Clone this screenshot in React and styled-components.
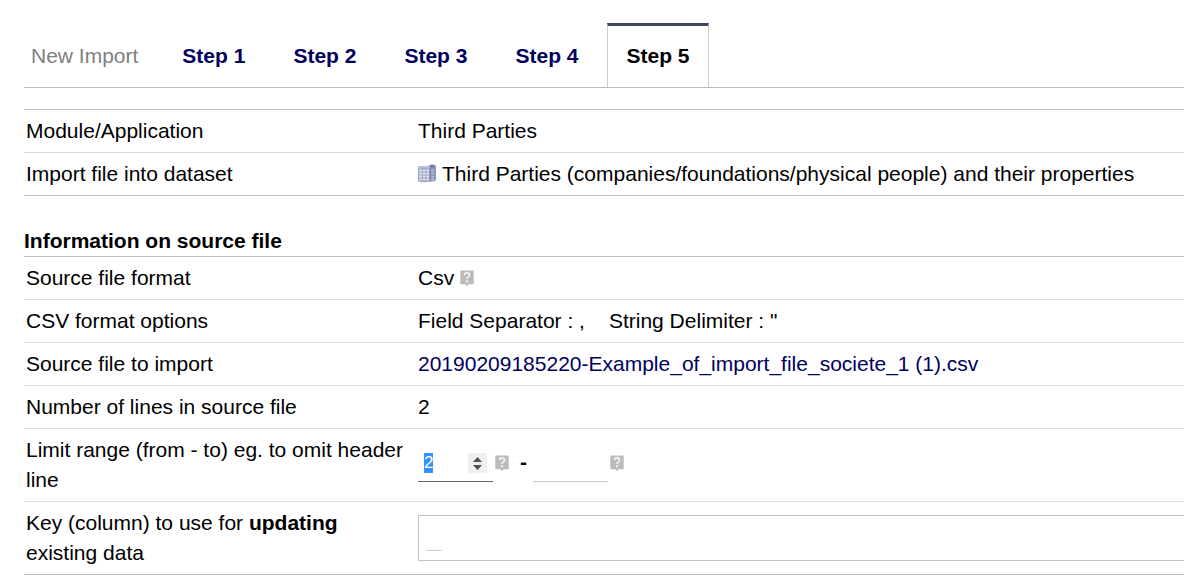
import React, { useEffect, useRef } from "react";
import styled, { createGlobalStyle } from "styled-components";

const GlobalStyle = createGlobalStyle`
  body {
    margin: 0;
    background-color: #fff;
    color: #000;
    font-family: "Liberation Sans", Arial, sans-serif;
    font-size: 21px;
    line-height: 30px;
  }
`;
const Page = styled.main`
  padding: 23px 0 12px 24px;
  overflow: hidden;
`;
const Tabs = styled.nav`
  display: flex;
  gap: 10px;
  height: 64px;
  border-bottom: 1px solid #bbb;
`;
const TabTitle = styled.span`
  padding: 18px 15px 0 7px;
  color: #808080;
  white-space: nowrap;
`;
const Tab = styled.a`
  padding: 15px 18px 0;
  border: 1px solid transparent;
  border-top: 3px solid transparent;
  border-bottom: none;
  color: #000060;
  font-weight: bold;
  text-decoration: none;
  white-space: nowrap;
  &[aria-current] {
    color: #000;
    border-color: #3c4664 #ccc;
  }
`;
const Table = styled.table`
  width: 100%;
  margin-top: ${(props) => (props.$spaced ? "21px" : "0")};
  border-collapse: separate;
  border-spacing: 0;
  border-top: 1px solid #c0c0c0;
  border-bottom: 1px solid #c0c0c0;
`;
const Row = styled.tr`
  & + & > * {
    border-top: 1px solid #ddd;
  }
`;
const Label = styled.th`
  box-sizing: border-box;
  width: 392px;
  padding: 6px 2px;
  font-weight: normal;
  text-align: left;
`;
const Value = styled.td`
  padding: ${(props) => (props.$wide ? "0 0 0 2px" : "6px 2px")};
`;
const Title = styled.h2`
  margin: 30px 0 0;
  font-size: 21px;
  line-height: 30px;
`;
const Line = styled.div`
  display: flex;
  align-items: center;
  white-space: nowrap;
  gap: ${(props) => props.$gap || "6px"};
`;
const FileLink = styled.a`
  color: #000060;
  text-decoration: none;
`;
const Range = styled.div`
  display: flex;
  align-items: center;
  gap: 2px;
  padding-bottom: 4px;
`;
const Dash = styled.span`
  padding: 0 4px 2px 9px;
  font-weight: bold;
`;
const NumberBox = styled.span`
  position: relative;
  display: flex;
`;
const NumberInput = styled.input`
  box-sizing: border-box;
  width: 75px;
  height: 38px;
  padding: 0 6px;
  border: none;
  border-bottom: 1px solid #ccc;
  background: transparent;
  outline: none;
  color: #000;
  font-family: inherit;
  font-size: 17px;
  appearance: textfield;
  &:focus {
    border-bottom-color: #666;
  }
  &::selection {
    background-color: #3390ff;
    color: #fff;
  }
  &::-webkit-inner-spin-button {
    display: none;
  }
`;
const Spinner = styled.svg`
  position: absolute;
  top: 9px;
  right: 6px;
`;
const KeyBox = styled.div`
  display: flex;
  align-items: flex-end;
  box-sizing: border-box;
  height: 46px;
  padding: 0 7px 9px;
  border: 1px solid #c4c4c4;
  border-right: none;
`;
const KeyInput = styled.input`
  box-sizing: border-box;
  width: 16px;
  height: 26px;
  padding: 0;
  border: none;
  border-bottom: 1px solid #ccc;
  outline: none;
  font-family: inherit;
  font-size: 17px;
`;

const HelpIcon = () => (
  <svg width="14" height="16" viewBox="0 0 14 16" aria-label="Help" role="img">
    <path
      d="M1 0.5h12q.7 0 .7.7v12.400q0 .7-.7.7H8.8L7 15.9 5.2 14.300H1q-.7 0-.7-.7V1.2q0-.7.7-.7z"
      fill="#bbb"
    />
    <path
      d="M4.500 5.100Q4.600 2.900 7 2.900t2.500 2Q9.500 6.100 8.200 6.900 7 7.600 7 9"
      fill="none"
      stroke="#f4f4f4"
      strokeWidth="1.700"
    />
    <rect x="6" y="10.200" width="2" height="2" fill="#f4f4f4" />
  </svg>
);

const CompanyIcon = () => (
  <svg width="18" height="20" viewBox="0 0 18 20" aria-hidden="true">
    <path d="M10.500 3Q11 .5 14 .5t4 2V16q-1 1.500-4 1.500h-3.500z" fill="#8f95ba" />
    <path d="M10.500 2.500Q12 .5 14 .5t4 1.700q-2 1.600-4 1.600t-3.500-1.300z" fill="#7a80a6" />
    <path d="M0 4q0-2 2-2h8q2 0 2 2v13.500q-6 1.500-12 0z" fill="#a0a5c6" />
    <path d="M0 4.500Q0 2 2 2h8q2 0 2 2z" fill="#b9bed6" />
    <path
      d="M1.200 6.500h2.600M4.800 6.500h2.600M8.400 6.500H11M1.200 9.500h2.600M4.800 9.500h2.600M8.400 9.500H11M1.200 12.500h2.600M4.800 12.500h2.600M8.400 12.500H11M1.200 15.500h2.600M4.800 15.500h2.600M8.400 15.500H11"
      stroke="#dfe3f0"
      strokeWidth="2"
    />
    <path d="M13.300 6.500h2.500M13.300 9.500h2.500M13.300 12.500h2.500M13.300 15.500h2.500" stroke="#c3c8e2" strokeWidth="1.500" />
    <path d="M12.300 4v13.500" stroke="#757ba3" strokeWidth=".8" />
  </svg>
);

const steps = ["Step 1", "Step 2", "Step 3", "Step 4", "Step 5"];

const App = () => {
  const fromRef = useRef(null);

  useEffect(() => {
    fromRef.current.focus();
    fromRef.current.select();
  }, []);

  return (
    <Page>
      <GlobalStyle />
      <Tabs>
        <TabTitle>New Import</TabTitle>
        {steps.map((step) => (
          <Tab
            key={step}
            href="#"
            aria-current={step === "Step 5" ? "step" : undefined}
          >
            {step}
          </Tab>
        ))}
      </Tabs>

      <Table $spaced>
        <tbody>
          <Row>
            <Label scope="row">Module/Application</Label>
            <Value>Third Parties</Value>
          </Row>
          <Row>
            <Label scope="row">Import file into dataset</Label>
            <Value>
              <Line>
                <CompanyIcon />
                <span>
                  Third Parties (companies/foundations/physical people) and
                  their properties
                </span>
              </Line>
            </Value>
          </Row>
        </tbody>
      </Table>

      <Title>Information on source file</Title>
      <Table>
        <tbody>
          <Row>
            <Label scope="row">Source file format</Label>
            <Value>
              <Line>
                <span>Csv</span>
                <HelpIcon />
              </Line>
            </Value>
          </Row>
          <Row>
            <Label scope="row">CSV format options</Label>
            <Value>
              <Line $gap="24px">
                <span>Field Separator : ,</span>
                <span>String Delimiter : "</span>
              </Line>
            </Value>
          </Row>
          <Row>
            <Label scope="row">Source file to import</Label>
            <Value>
              <FileLink href="#">
                20190209185220-Example_of_import_file_societe_1 (1).csv
              </FileLink>
            </Value>
          </Row>
          <Row>
            <Label scope="row">Number of lines in source file</Label>
            <Value>2</Value>
          </Row>
          <Row>
            <Label scope="row">
              <label htmlFor="from">
                Limit range (from - to) eg. to omit header line
              </label>
            </Label>
            <Value>
              <Range>
                <NumberBox>
                  <NumberInput
                    id="from"
                    type="number"
                    defaultValue="2"
                    ref={fromRef}
                  />
                  <Spinner width="19" height="20" viewBox="0 0 19 20">
                    <rect width="19" height="20" fill="#f0f0f0" />
                    <path
                      d="M9.500 4 14 9H5zM9.500 17 14 12H5z"
                      fill="#505050"
                    />
                  </Spinner>
                </NumberBox>
                <HelpIcon />
                <Dash>-</Dash>
                <NumberInput type="text" aria-label="Limit range to" />
                <HelpIcon />
              </Range>
            </Value>
          </Row>
          <Row>
            <Label scope="row">
              <label htmlFor="key">
                Key (column) to use for <b>updating</b> existing data
              </label>
            </Label>
            <Value $wide>
              <KeyBox>
                <KeyInput id="key" type="text" />
              </KeyBox>
            </Value>
          </Row>
        </tbody>
      </Table>
    </Page>
  );
};

export default App;
